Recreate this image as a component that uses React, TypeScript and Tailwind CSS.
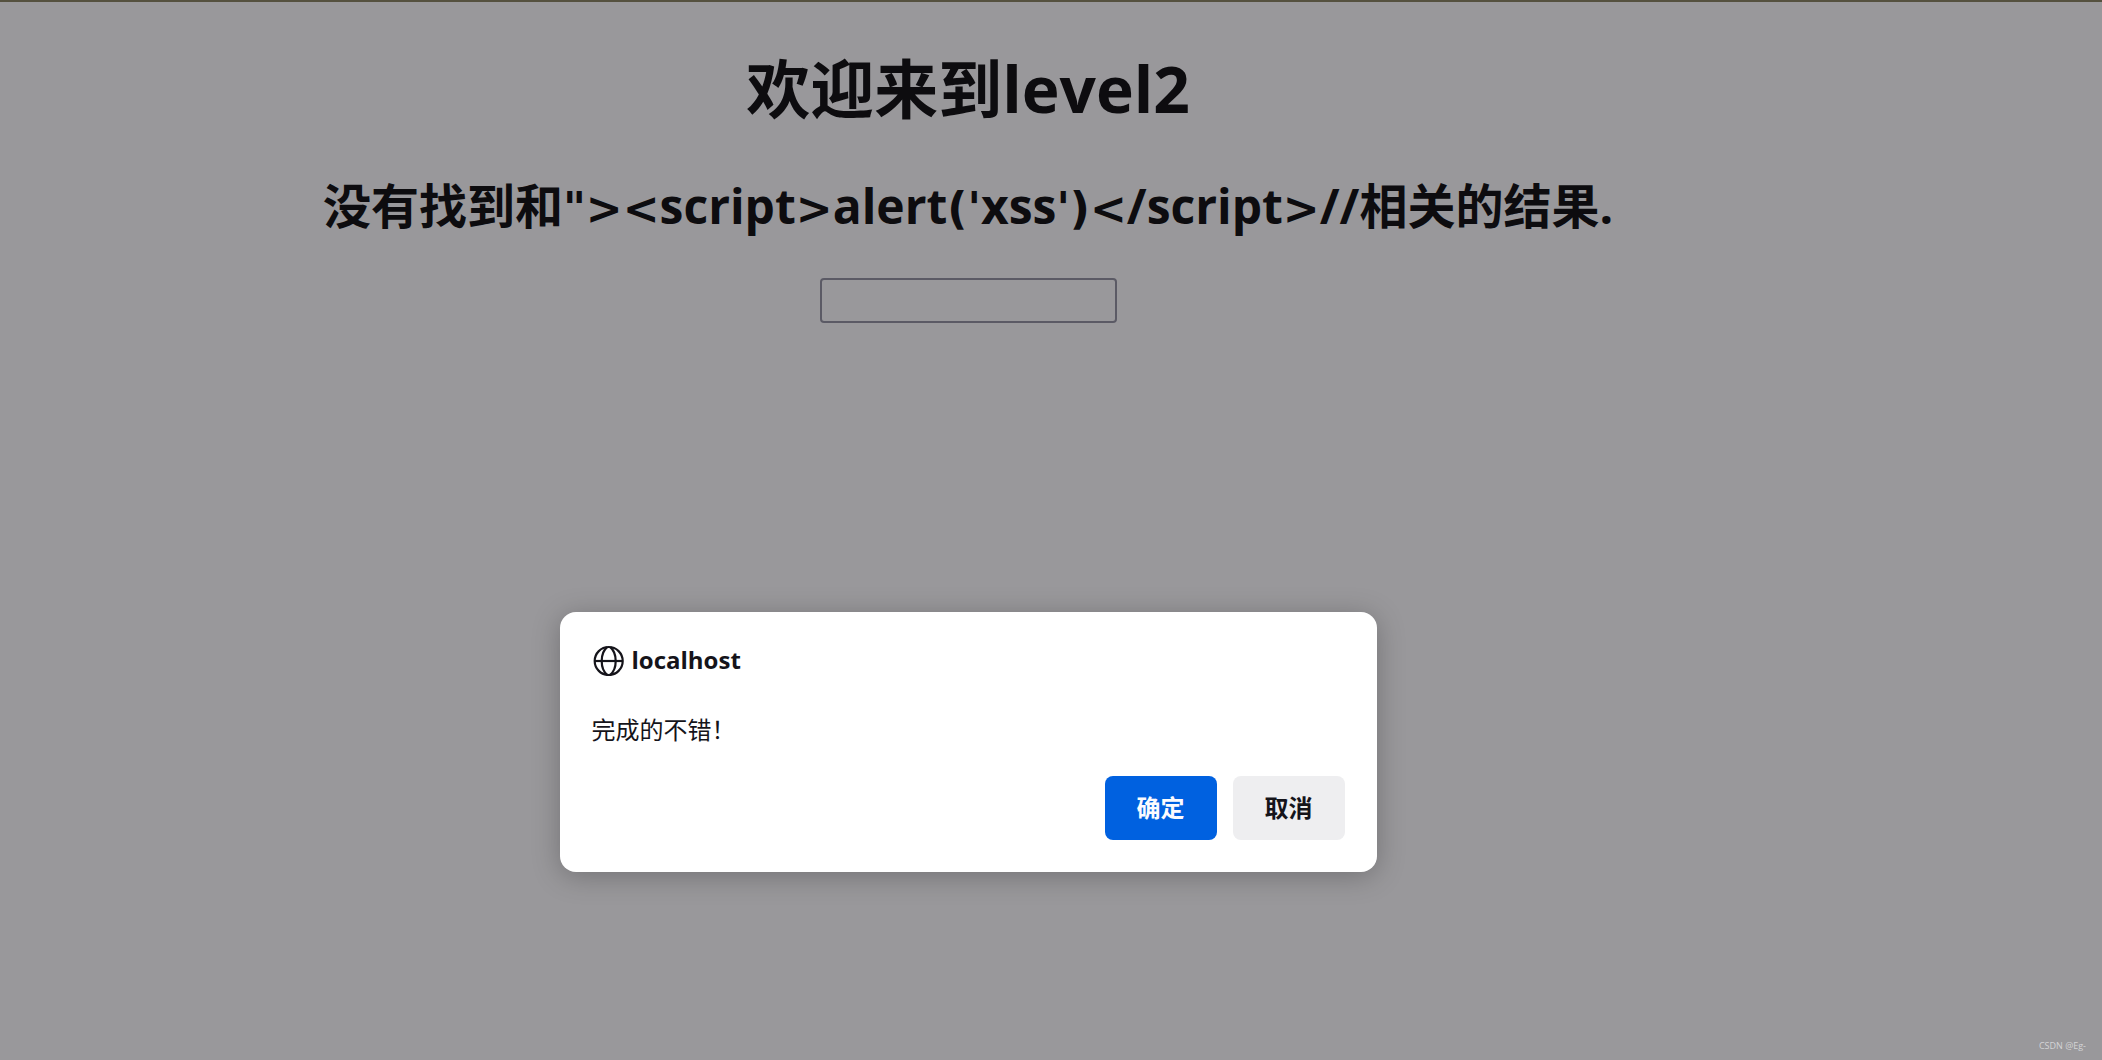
import { useState } from "react"

function GlobeIcon() {
  return (
    <svg
      className="size-8"
      viewBox="0 0 32 32"
      fill="none"
      stroke="currentColor"
      strokeWidth="2.2"
      aria-hidden="true"
    >
      <circle cx="16.700" cy="17" r="14" />
      <path d="M2.700 17h28" />
      <path d="M15.100 3.200C11.300 6.500 9.700 12 9.700 17s1.600 10.500 5.400 13.800" />
      <path d="M18.300 3.200C22.100 6.500 23.700 12 23.700 17s-1.600 10.500-5.400 13.800" />
    </svg>
  )
}

interface ConfirmDialogProps {
  host: string
  message: string
}

function ConfirmDialog({ host, message }: ConfirmDialogProps) {
  return (
    <div
      role="dialog"
      aria-labelledby="dialog-host"
      className="w-full max-w-[817px] rounded-2xl bg-white p-8 text-2xl text-[#15141a] shadow-[0_4px_28px_rgba(0,0,0,0.25)]"
    >
      <div className="flex items-center gap-2">
        <GlobeIcon />
        <h3 id="dialog-host" className="font-bold">
          {host}
        </h3>
      </div>
      <p className="mt-[38px]">{message}</p>
      <div className="mt-[30px] flex justify-end gap-4">
        <button className="h-16 rounded-lg bg-[#0061e0] px-8 font-bold text-[#fbfbfe]">
          确定
        </button>
        <button className="h-16 rounded-lg bg-[#eeeef0] px-8 font-bold">
          取消
        </button>
      </div>
    </div>
  )
}

// brackets and quotes use a wider face than the letters
function Keyword({ text }: { text: string }) {
  return text.split(/([<>"'()]+)/).map((part, i) =>
    i % 2 ? (
      <span
        key={i}
        className="font-['DejaVu_Sans',sans-serif] text-[44px] leading-none"
      >
        {part}
      </span>
    ) : (
      part
    )
  )
}

function App() {
  const [keyword, setKeyword] = useState("")

  return (
    <div className="relative min-h-screen bg-white font-['Open_Sans','Noto_Sans_CJK_SC',sans-serif] text-black">
      <main className="flex flex-col items-center pt-[47px] pr-[166px]">
        <h1 className="text-[64px] leading-[84px] font-bold">欢迎来到level2</h1>
        <h2 className="mt-[43px] text-5xl leading-16 font-bold">
          没有找到和
          <Keyword text={`"><script>alert('xss')</script>//`} />
          相关的结果.
        </h2>
        <input
          aria-label="keyword"
          value={keyword}
          onChange={(e) => setKeyword(e.target.value)}
          className="mt-10 h-[45px] w-[297px] rounded border-2 border-[#8f8f9d] px-1 text-2xl"
        />
      </main>

      <div className="absolute inset-0 flex flex-col items-center border-t-2 border-[#55513f] bg-[#1c1b22]/45 pt-[610px] pr-[166px]">
        <ConfirmDialog host="localhost" message="完成的不错！" />
      </div>

      <footer className="absolute right-4 bottom-2 text-[9px] leading-3 text-[#d4d4d6]">
        CSDN @Eg-
      </footer>
    </div>
  )
}

export default App
